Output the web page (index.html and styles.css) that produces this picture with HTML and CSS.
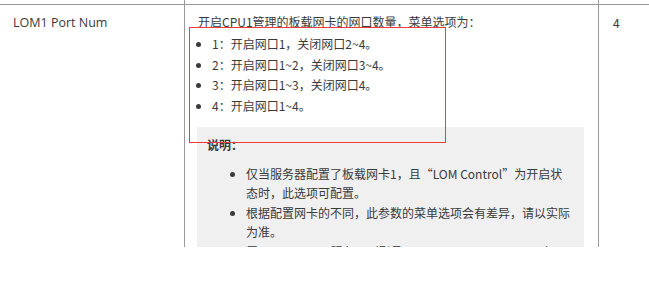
FILE: index.html
```html
<!DOCTYPE html>
<html lang="zh-CN">
<head>
<meta charset="UTF-8">
<meta name="viewport" content="width=device-width, initial-scale=1.0">
<title>LOM1 Port Num</title>
<link rel="stylesheet" href="styles.css">
</head>
<body>
    <div class="sheet">
        <div class="param-table">
            <!-- tail of the previous row -->
            <div class="cell cell-tail"></div>
            <div class="cell cell-tail"></div>
            <div class="cell cell-tail"></div>

            <div class="cell cell-name">LOM1 Port Num</div>
            <div class="cell cell-desc">
                <p class="desc-lead">开启CPU1管理的板载网卡的网口数量，菜单选项为：</p>
                <ul class="option-list">
                    <li>1：开启网口1，关闭网口2~4。</li>
                    <li>2：开启网口1~2，关闭网口3~4。</li>
                    <li>3：开启网口1~3，关闭网口4。</li>
                    <li>4：开启网口1~4。</li>
                </ul>
                <div class="note">
                    <div class="note-title">说明：</div>
                    <ul class="note-list">
                        <li>仅当服务器配置了板载网卡1，且“LOM Control”为开启状态时，此选项可配置。</li>
                        <li>根据配置网卡的不同，此参数的菜单选项会有差异，请以实际为准。</li>
                        <li>属于 iBMC 2288服务器（型号2188、2288、5188、5288）时，默认值为4。</li>
                    </ul>
                </div>
                <div class="highlight"></div>
            </div>
            <div class="cell cell-default">4</div>
        </div>
    </div>
</body>
</html>
```

FILE: styles.css
```css
body {
    margin: 0;
    background-color: #fff;
    font-family: "Noto Sans CJK SC", "Open Sans", sans-serif;
    font-size: 12px;
    color: #3a3a3a;
}
.sheet {
    height: 247px;
    overflow: hidden;
}
.param-table {
    display: grid;
    grid-template-columns: 184px 414px 1fr;
}
.cell {
    border-left: 1px solid #9a9a9a;
    border-top: 1px solid #9a9a9a;
    padding: 7px 13px 0;
    line-height: 20px;
}
.cell-tail {
    height: 4px;
    padding: 0;
    border-top: none;
}
.cell-name,
.cell-tail:first-child {
    border-left: none;
}
.cell-name {
    font-family: "Open Sans", "Noto Sans CJK SC", sans-serif;
    font-size: 12.5px;
    padding-top: 8px;
}
.cell-desc {
    position: relative;
    padding-right: 14px;
}
.cell-default {
    padding-left: 14px;
    padding-top: 8px;
}
.desc-lead {
    margin: 0 0 2px;
}
.option-list {
    margin: 0;
    padding-left: 14px;
    line-height: 20.7px;
}
.note {
    background-color: #f0f0f0;
    margin: 10px 0 0 -1px;
    padding: 8px 10px 10px;
    height: 200px;
}
.note-title {
    font-weight: bold;
}
.note-list {
    margin: 9px 0 0;
    padding-left: 39px;
    line-height: 19px;
}
.note-list li {
    margin-bottom: 1px;
}
/* red frame drawn over the option list */
.highlight {
    position: absolute;
    left: 4px;
    top: 22px;
    width: 255px;
    height: 114px;
    border: 1px solid #ef3b3b;
    pointer-events: none;
}
```
